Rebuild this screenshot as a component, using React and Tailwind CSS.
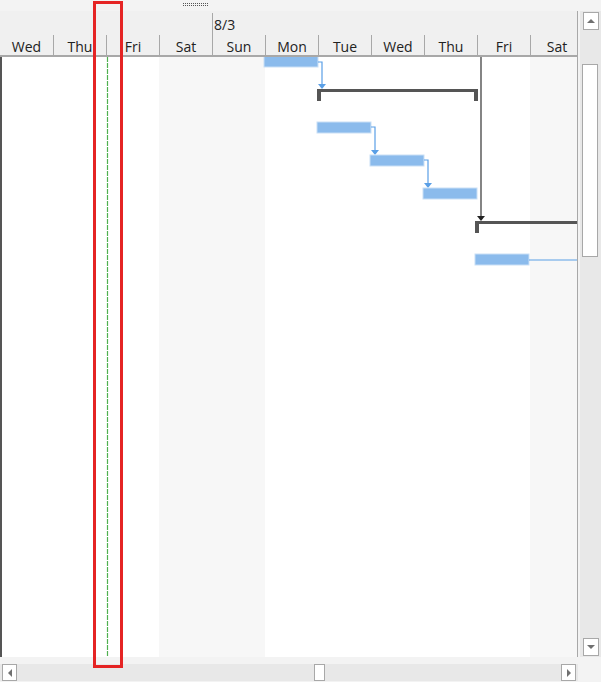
import React from "react";

const days = ["Wed", "Thu", "Fri", "Sat", "Sun", "Mon", "Tue", "Wed", "Thu", "Fri", "Sat"];
const weekend = [false, false, false, true, true, false, false, false, false, false, true];

const Bar = ({ x, y, w }) => (
    <rect x={x} y={y} width={w} height={11} fill="#8bbbec" stroke="#c9dff6" strokeWidth="1" />
);

const Link = ({ x1, y1, x2, y2 }) => (
    <g>
        <polyline points={`${x1},${y1} ${x2},${y1} ${x2},${y2 - 4}`} fill="none" stroke="#5a9fe6" strokeWidth="1.2" />
        <polygon points={`${x2 - 4},${y2 - 5} ${x2 + 4},${y2 - 5} ${x2},${y2}`} fill="#5a9fe6" />
    </g>
);

const Summary = ({ x1, x2, y, capRight = true }) => (
    <g fill="#555555">
        <rect x={x1} y={y} width={x2 - x1} height={3} />
        <rect x={x1} y={y} width={4} height={12} />
        {capRight && <rect x={x2 - 4} y={y} width={4} height={12} />}
    </g>
);

const ScrollButton = ({ dir, className = "" }) => (
    <div className={`bg-white border border-[#a8a8a8] flex items-center justify-center ${className}`}>
        {dir === "up" && <div className="w-0 h-0 border-l-[4px] border-r-[4px] border-b-[4px] border-l-transparent border-r-transparent border-b-[#707070]" />}
        {dir === "down" && <div className="w-0 h-0 border-l-[4px] border-r-[4px] border-t-[4px] border-l-transparent border-r-transparent border-t-[#707070]" />}
        {dir === "left" && <div className="w-0 h-0 border-t-[4px] border-b-[4px] border-r-[4px] border-t-transparent border-b-transparent border-r-[#707070]" />}
        {dir === "right" && <div className="w-0 h-0 border-t-[4px] border-b-[4px] border-l-[4px] border-t-transparent border-b-transparent border-l-[#707070]" />}
    </div>
);

export default function App() {
    return (
        <div className="w-[601px] h-[682px] bg-[#f3f3f3] flex flex-col relative overflow-hidden font-['Open_Sans','Noto_Sans',sans-serif] text-[#222]">
            {/* grip */}
            <div className="h-[11px] shrink-0 relative">
                <div className="absolute left-[183px] top-[3px] w-[25px] h-[3px] border-t border-b border-dotted border-[#555]" />
            </div>

            <div className="flex h-[646px] shrink-0">
                <div className="w-[578px] flex flex-col border-r border-[#a8a8a8]">
                    {/* header */}
                    <div className="h-[46px] bg-[#f0f0f0] border-b-2 border-[#a8a8a8] flex flex-col">
                        <div className="h-[24px] relative">
                            <div className="absolute left-[212px] top-[2px] bottom-0 border-l border-[#a8a8a8]" />
                            <span className="absolute left-[214px] top-[6px] text-[14px] leading-[16px]">8/3</span>
                        </div>
                        <div className="flex flex-1">
                            {days.map((d, i) => (
                                <div key={i} className={`w-[53px] shrink-0 text-center text-[14px] leading-[16px] pt-[4px] ${i > 0 ? "border-l border-[#a8a8a8]" : ""}`}>
                                    {d}
                                </div>
                            ))}
                        </div>
                    </div>

                    {/* body */}
                    <div className="flex-1 relative overflow-hidden bg-white border-l-2 border-[#555]">
                        <div className="absolute inset-0 flex -ml-[2px]">
                            {weekend.map((w, i) => (
                                <div key={i} className={`w-[53px] shrink-0 ${w ? "bg-[#f7f7f7]" : ""}`} />
                            ))}
                        </div>
                        <svg className="absolute -left-[2px] top-0" width="580" height="600">
                            <line x1="107.5" y1="0" x2="107.5" y2="600" stroke="#4fb04f" strokeWidth="1.2" strokeDasharray="5 1" />
                            <Bar x={264} y={-1} w={54} />
                            <Link x1={318} y1={5} x2={322} y2={32} />
                            <Summary x1={317} x2={478} y={32} />
                            <Bar x={317} y={65} w={54} />
                            <Link x1={371} y1={70} x2={375} y2={98} />
                            <Bar x={370} y={98} w={54} />
                            <Link x1={424} y1={103} x2={428} y2={131} />
                            <Bar x={423} y={131} w={54} />
                            <line x1="481" y1="0" x2="481" y2="160" stroke="#333" strokeWidth="1.2" />
                            <polygon points="477,159 485,159 481,164" fill="#222" />
                            <Summary x1={475} x2={580} y={164} capRight={false} />
                            <Bar x={475} y={197} w={54} />
                            <line x1="529" y1="203" x2="580" y2="203" stroke="#5a9fe6" strokeWidth="1.2" />
                        </svg>
                    </div>
                </div>

                {/* vertical scrollbar */}
                <div className="w-[21px] ml-[2px] bg-[#e8e8e8] flex flex-col items-center pt-[1px] pb-[1px]">
                    <ScrollButton dir="up" className="w-[16px] h-[18px]" />
                    <div className="flex-1 w-full relative">
                        <div className="absolute left-[2px] w-[16px] top-[34px] h-[193px] bg-white border border-[#a8a8a8]" />
                    </div>
                    <ScrollButton dir="down" className="w-[16px] h-[18px]" />
                </div>
            </div>

            {/* horizontal scrollbar */}
            <div className="h-[7px] shrink-0" />
            <div className="w-[578px] h-[17px] bg-[#e8e8e8] flex items-stretch px-[2px] relative">
                <ScrollButton dir="left" className="w-[15px]" />
                <div className="flex-1 relative">
                    <div className="absolute left-[297px] top-0 bottom-0 w-[11px] bg-white border border-[#a8a8a8]" />
                </div>
                <ScrollButton dir="right" className="w-[15px]" />
            </div>

            {/* highlight frame */}
            <div className="absolute left-[93px] top-[1px] w-[30px] h-[667px] border-[3px] border-[#e52424]" />
        </div>
    );
}
